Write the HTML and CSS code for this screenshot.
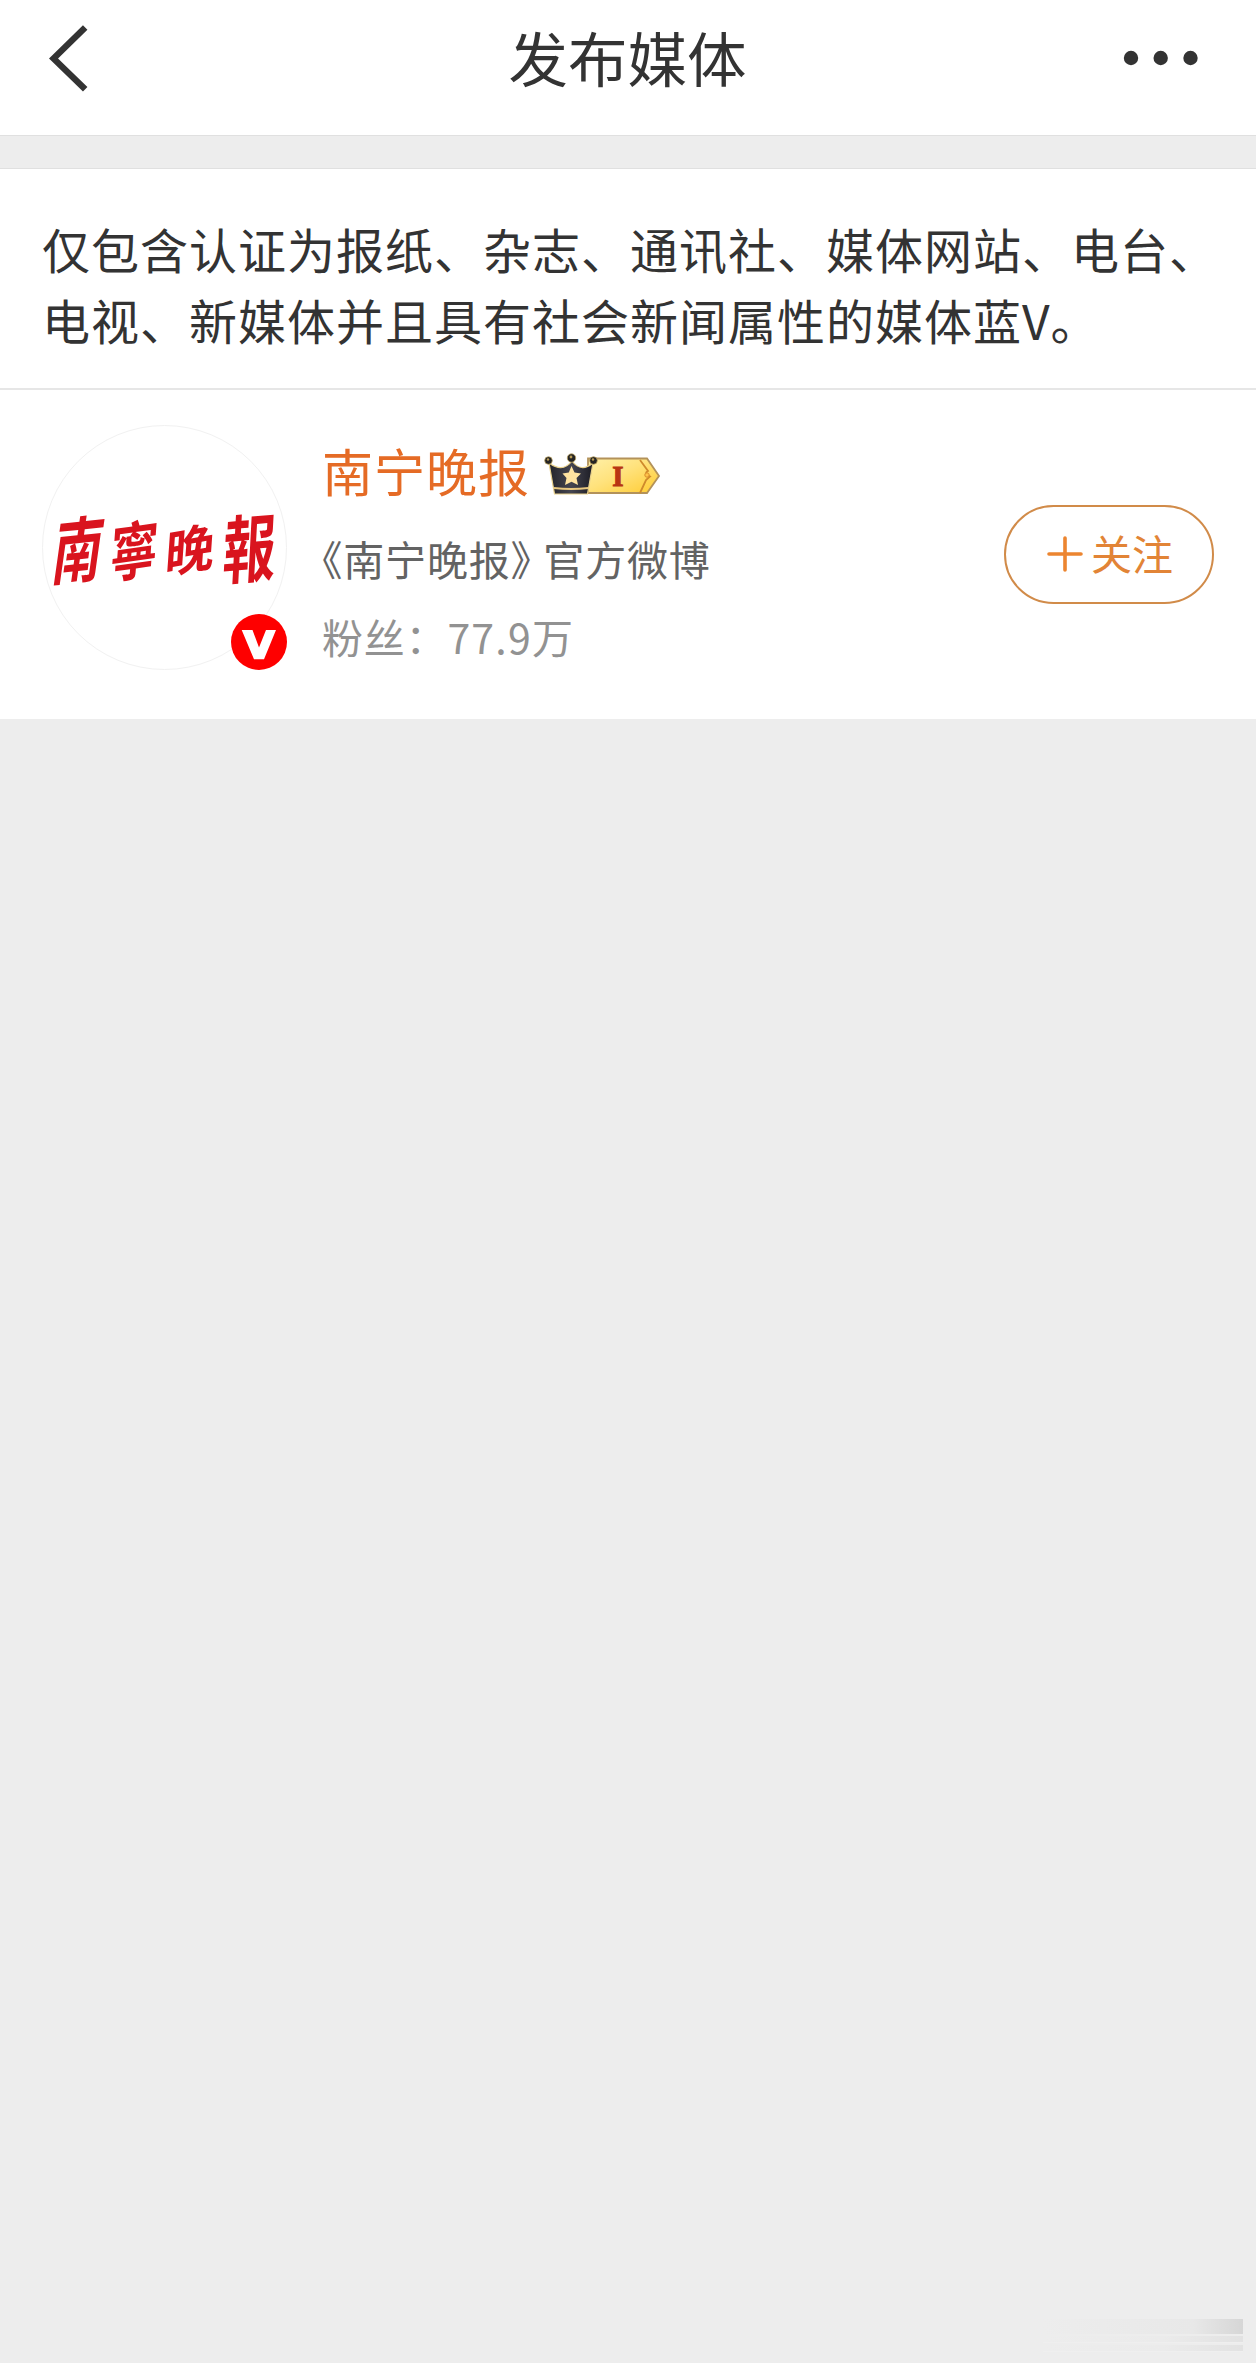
FILE: index.html
```
<!DOCTYPE html>
<html lang="zh-CN">
<head>
  <meta charset="UTF-8">
  <meta name="viewport" content="width=device-width, initial-scale=1.0">
  <title>发布媒体</title>
  <link rel="stylesheet" href="styles.css">
</head>
<body>

  <!-- Top bar -->
  <header class="header">
    <button class="icon-btn" aria-label="返回">
      <svg class="back-icon" width="40" height="68" viewBox="0 0 40 68">
        <path d="M36.2 2.5 L4.5 33.5 L36.2 64.3" fill="none" stroke="#333" stroke-width="6.4"/>
      </svg>
    </button>
    <h1 class="title">发布媒体</h1>
    <button class="icon-btn more-btn" aria-label="更多">
      <svg width="76" height="16" viewBox="0 0 76 16" fill="#333">
        <circle cx="8" cy="8" r="7.2"/>
        <circle cx="37.7" cy="8" r="7.2"/>
        <circle cx="67.5" cy="8" r="7.2"/>
      </svg>
    </button>
  </header>

  <main>
    <p class="notice">仅包含认证为报纸、杂志、通讯社、媒体网站、电台、<br>电视、新媒体并且具有社会新闻属性的媒体蓝V。</p>

    <!-- Media account -->
    <section class="account">
      <div class="avatar">
        <svg class="avatar-logo" width="245" height="245" viewBox="0 0 245 245">
          <g class="logo-text">
            <text transform="translate(7 155) rotate(-6) skewX(-14) scale(.88 1.26)">南</text>
            <text transform="translate(66 153) rotate(-8) skewX(-12) scale(.86 1.1)">寧</text>
            <text transform="translate(122 149) rotate(-10) skewX(-14) scale(.88 .9)">晚</text>
            <text transform="translate(180 154) rotate(-5) skewX(-8) scale(.94 1.3)">報</text>
          </g>
        </svg>
        <svg class="verified" width="56" height="56" viewBox="0 0 56 56">
          <circle cx="28" cy="28" r="28" fill="#fe0000"/>
          <path d="M10.7 16 H21.5 L28 33.5 L35 16 H45 L33 45.2 H23 Z" fill="#fff"/>
        </svg>
      </div>

      <div class="info">
        <div class="name-row">
          <span class="name">南宁晚报</span>
          <svg class="vip" width="122" height="48" viewBox="0 0 122 48">
            <defs>
              <linearGradient id="gold" x1="0" y1="0" x2="1" y2="1">
                <stop offset="0" stop-color="#fff0a8"/>
                <stop offset=".45" stop-color="#ffe27c"/>
                <stop offset="1" stop-color="#ffcb30"/>
              </linearGradient>
              <linearGradient id="crown" x1="0" y1="0" x2="1" y2="0">
                <stop offset="0" stop-color="#24242a"/>
                <stop offset=".5" stop-color="#454550"/>
                <stop offset="1" stop-color="#1c1c24"/>
              </linearGradient>
            </defs>
            <path d="M45 6.5 H104 L116 24 L104 41 H45 Z" fill="url(#gold)" stroke="#b3925a" stroke-width="1.8"/>
            <path d="M97 8 L105 19 Q101 21 105 23.5 L107 24.5 L103 28 L97 41" fill="none" stroke="#cf8a2c" stroke-width="1.8"/>
            <circle cx="104" cy="23" r="2.2" fill="#ffc34a" stroke="#d98e2b"/>
            <path d="M6 11 Q20 21 29 9 Q38 21 50 11 L44.5 42 H11.5 Z" fill="url(#crown)" stroke="#ead28c" stroke-width="1.2"/>
            <path d="M11 36 Q28 38 45.5 36" fill="none" stroke="#e8c77f" stroke-width="2"/>
            <path d="M28.5 14 L31.5 20.5 L38 21.5 L33.5 26 L35 33 L28.5 29.7 L22 33 L23.5 26 L19.5 21.5 L25.8 20.5 Z" fill="#ffe3a0"/>
            <g fill="#242424" stroke="#bda25b" stroke-width=".7">
              <circle cx="5.5" cy="8.5" r="3.8"/>
              <circle cx="28.5" cy="6" r="4.2"/>
              <circle cx="50.5" cy="8.5" r="3.8"/>
            </g>
            <g fill="#b99b55">
              <circle cx="5" cy="7.5" r="1.2"/>
              <circle cx="28" cy="5" r="1.4"/>
              <circle cx="50" cy="7.5" r="1.2"/>
            </g>
            <text class="vip-level" x="75" y="33.5">I</text>
          </svg>
        </div>
        <p class="desc"><span class="quote-open">《</span>南宁晚报<span class="quote-close">》</span>官方微博</p>
        <p class="fans">粉丝：<span class="num">77.9</span>万</p>
      </div>

      <button class="follow-btn">
        <svg class="plus" width="36" height="36" viewBox="0 0 36 36">
          <path d="M18 2 V34 M2 18 H34" stroke="#ec8530" stroke-width="3.6" stroke-linecap="round"/>
        </svg>
        <span class="follow-text">关注</span>
      </button>
    </section>
  </main>

  <div class="watermark">
    <div class="watermark-bar"></div>
    <div class="watermark-line"></div>
    <div class="watermark-line"></div>
  </div>

</body>
</html>
```

FILE: styles.css
```
* {
  box-sizing: border-box;
}

body {
  margin: 0;
  min-height: 100vh;
  background: #ededed;
  color: #333;
  font-family: "Noto Sans CJK SC", sans-serif;
}

button {
  border: none;
  background: none;
  padding: 0;
  color: inherit;
  font-family: inherit;
}

svg {
  display: block;
}

/* Top bar */
.header {
  display: flex;
  justify-content: space-between;
  height: 136px;
  padding: 0 57px 0 47px;
  background: #fff;
  border-bottom: 1px solid #e0e0e0;
}

.icon-btn {
  width: 84px;
  height: 116px;
}

.back-icon {
  margin: 2px 0 0 2px;
}

.more-btn {
  display: flex;
  align-items: center;
  justify-content: flex-end;
  width: 76px;
}

.title {
  margin: 0 0 0 1px;
  font-size: 59.5px;
  font-weight: 400;
  line-height: 112px;
}

/* Content */
main {
  margin-top: 32px;
  background: #fff;
  border-top: 1px solid #e0e0e0;
}

.notice {
  margin: 0;
  height: 221px;
  padding: 44px 0 0 42px;
  border-bottom: 2px solid #e6e6e6;
  font-size: 48px;
  letter-spacing: 1px;
  line-height: 71px;
  white-space: nowrap;
}

.account {
  display: flex;
  height: 329px;
  padding: 35px 42px 0;
}

.avatar {
  position: relative;
  width: 245px;
  height: 245px;
}

.avatar-logo {
  border: 1px solid #f1f1f1;
  border-radius: 50%;
}

.logo-text {
  fill: #d9141e;
  font-size: 57px;
  font-weight: 700;
}

.verified {
  position: absolute;
  right: 0;
  bottom: 0;
}

.info {
  margin-left: 35px;
}

.name-row {
  display: flex;
  align-items: center;
  height: 90px;
}

.name {
  color: #e56b25;
  font-size: 51px;
  letter-spacing: 1px;
  line-height: 90px;
}

.vip {
  margin: 12px 0 0 13px;
}

.vip-level {
  fill: #b83512;
  font-family: "Liberation Serif", serif;
  font-size: 29px;
  font-weight: bold;
  stroke: #b83512;
  text-anchor: middle;
}

.desc,
.fans {
  margin: 0;
  font-size: 41px;
  letter-spacing: 0.8px;
  line-height: 80px;
  white-space: nowrap;
}

.desc {
  height: 80px;
  margin-top: 3px;
  color: #636363;
}

.fans {
  line-height: 76px;
  color: #929292;
}

/* Half-width book title marks */
.quote-open,
.quote-close {
  font-feature-settings: "halt";
}

.quote-close {
  margin-right: 11.5px;
}

.num {
  letter-spacing: 1.2px;
}

.follow-btn {
  display: flex;
  align-items: center;
  justify-content: center;
  gap: 8px;
  width: 210px;
  height: 99px;
  margin: 80px 0 0 auto;
  padding-left: 2px;
  border: 2px solid #d18b49;
  border-radius: 50px;
  color: #e28436;
  font-size: 41px;
}

.plus {
  margin-bottom: 2px;
}

.follow-text {
  margin-bottom: 5px;
}

/* Faded mark in the corner */
.watermark {
  position: fixed;
  right: 13px;
  bottom: 12px;
  width: 200px;
  height: 32px;
}

.watermark-bar {
  height: 15px;
  background: linear-gradient(to right, #ededed, #e8e8e8 75%, #d6d6d6);
}

.watermark-line {
  height: 7px;
  margin-top: 2px;
  border-bottom: 1px solid #efefef;
  background: linear-gradient(to right, #ededed, #ebebeb 60%, #e2e2e2);
}
```
